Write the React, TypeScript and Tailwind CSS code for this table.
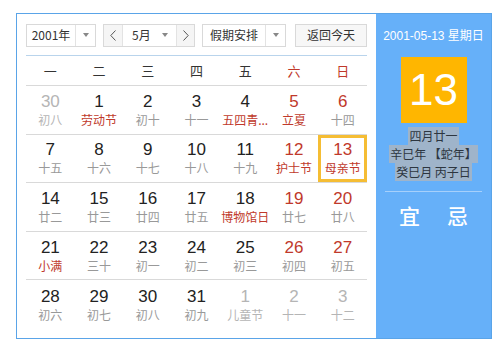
import React from 'react';

type Day = { n: number; lunar: string; dim?: boolean; red?: boolean; fest?: boolean; sel?: boolean };

const weeks: Day[][] = [
  [
    { n: 30, lunar: '初八', dim: true },
    { n: 1, lunar: '劳动节', fest: true },
    { n: 2, lunar: '初十' },
    { n: 3, lunar: '十一' },
    { n: 4, lunar: '五四青...', fest: true },
    { n: 5, lunar: '立夏', red: true, fest: true },
    { n: 6, lunar: '十四', red: true },
  ],
  [
    { n: 7, lunar: '十五' },
    { n: 8, lunar: '十六' },
    { n: 9, lunar: '十七' },
    { n: 10, lunar: '十八' },
    { n: 11, lunar: '十九' },
    { n: 12, lunar: '护士节', red: true, fest: true },
    { n: 13, lunar: '母亲节', red: true, fest: true, sel: true },
  ],
  [
    { n: 14, lunar: '廿二' },
    { n: 15, lunar: '廿三' },
    { n: 16, lunar: '廿四' },
    { n: 17, lunar: '廿五' },
    { n: 18, lunar: '博物馆日', fest: true },
    { n: 19, lunar: '廿七', red: true },
    { n: 20, lunar: '廿八', red: true },
  ],
  [
    { n: 21, lunar: '小满', fest: true },
    { n: 22, lunar: '三十' },
    { n: 23, lunar: '初一' },
    { n: 24, lunar: '初二' },
    { n: 25, lunar: '初三' },
    { n: 26, lunar: '初四', red: true },
    { n: 27, lunar: '初五', red: true },
  ],
  [
    { n: 28, lunar: '初六' },
    { n: 29, lunar: '初七' },
    { n: 30, lunar: '初八' },
    { n: 31, lunar: '初九' },
    { n: 1, lunar: '儿童节', dim: true },
    { n: 2, lunar: '十一', dim: true },
    { n: 3, lunar: '十二', dim: true },
  ],
];

const heads = ['一', '二', '三', '四', '五', '六', '日'];

function Caret() {
  return <span className="h-0 w-0 border-x-[3px] border-t-[4px] border-x-transparent border-t-[#888]" />;
}

function Chevron({ dir }: { dir: 'l' | 'r' }) {
  return (
    <svg width="6" height="11" viewBox="0 0 6 11" fill="none" stroke="#555" strokeWidth="1">
      <path d={dir === 'l' ? 'M5.5 0.5 L0.8 5.5 L5.5 10.5' : 'M0.5 0.5 L5.2 5.5 L0.5 10.5'} />
    </svg>
  );
}

function DayCell({ d }: { d: Day }) {
  const numColor = d.dim ? 'text-[#b5b5b5]' : d.red ? 'text-[#c0392b]' : 'text-[#222]';
  const lunColor = d.dim ? 'text-[#b5b5b5]' : d.fest ? 'text-[#c0392b]' : 'text-[#999]';
  return (
    <div
      className={`flex h-full flex-col items-center justify-center ${
        d.sel ? 'border-[3px] border-[#f5bd34]' : ''
      }`}
    >
      <div className={`font-['Liberation_Sans',sans-serif] text-[17px] leading-[20px] ${numColor}`}>{d.n}</div>
      <div className={`whitespace-nowrap text-[12px] leading-[16px] ${lunColor}`}>{d.lunar}</div>
    </div>
  );
}

export default function App() {
  return (
    <div className="h-[342px] w-[499px] bg-white pl-4 pt-[13px] font-['Noto_Sans_CJK_SC',sans-serif]">
      <div className="flex h-[326px] w-[476px] border border-[#5aa4e8]">
        <div className="flex w-[359px] flex-col bg-white px-[9px]">
          <div className="flex h-[42px] items-center gap-[7px] border-b border-[#b9d4ec] pt-[1px]">
            <div className="flex h-[23px] w-[70px] items-center border border-[#d9d9d9] text-[12px] text-[#333]">
              <span className="w-[48px] text-center">2001年</span>
              <span className="flex h-full flex-1 items-center justify-center border-l border-[#e3e3e3]"><Caret /></span>
            </div>
            <div className="flex h-[23px] w-[92px] items-center border border-[#d9d9d9] text-[12px] text-[#333]">
              <span className="flex h-full w-[19px] items-center justify-center border-r border-[#e3e3e3] bg-[#f5f5f5]">
                <Chevron dir="l" />
              </span>
              <span className="flex h-full w-[53px] items-center justify-between pl-[9px] pr-[8px]">
                5月
                <Caret />
              </span>
              <span className="flex h-full flex-1 items-center justify-center border-l border-[#e3e3e3] bg-[#f5f5f5]">
                <Chevron dir="r" />
              </span>
            </div>
            <div className="flex h-[23px] w-[84px] items-center border border-[#d9d9d9] text-[12px] text-[#333]">
              <span className="w-[62px] text-center">假期安排</span>
              <span className="flex h-full flex-1 items-center justify-center border-l border-[#e3e3e3]"><Caret /></span>
            </div>
            <div className="ml-auto flex h-[23px] w-[72px] items-center justify-center border border-[#d9d9d9] bg-[#f7f7f7] text-[12px] text-[#333]">
              返回今天
            </div>
          </div>
          <div className="grid h-[30px] grid-cols-7 items-center border-b border-[#d9d9d9] text-[13px]">
            {heads.map((h, i) => (
              <div key={h} className={`text-center ${i >= 5 ? 'text-[#c0392b]' : 'text-[#333]'}`}>
                {h}
              </div>
            ))}
          </div>
          {weeks.map((w, wi) => (
            <div
              key={wi}
              className={`grid h-[48.6px] grid-cols-7 ${wi < weeks.length - 1 ? 'border-b border-[#d9d9d9]' : ''}`}
            >
              {w.map((d, di) => (
                <DayCell key={di} d={d} />
              ))}
            </div>
          ))}
        </div>
        <div className="flex flex-1 flex-col items-center bg-[#66b0f9] pt-[13px] text-white">
          <div className="font-['Liberation_Sans','Noto_Sans_CJK_SC',sans-serif] text-[12px] leading-[18px]">2001-05-13 星期日</div>
          <div className="mt-[12px] flex h-[66px] w-[66px] items-center justify-center bg-[#ffb600] font-['Liberation_Sans',sans-serif] text-[44px] leading-none">
            13
          </div>
          <div className="mt-[4px] flex flex-col items-center text-[12px] leading-[18px] text-[#2d3640]">
            <span className="bg-[#9fb4ca] px-[1px]">四月廿一</span>
            <span className="bg-[#9fb4ca] px-[1px]">辛巳年 【蛇年】</span>
            <span className="bg-[#9fb4ca] px-[1px]">癸巳月 丙子日</span>
          </div>
          <div className="mt-[10px] h-px w-[97px] bg-[#a6d0fb]" />
          <div className="mt-[8px] flex gap-[27px] text-[21px] font-medium leading-[30px]">
            <span>宜</span>
            <span>忌</span>
          </div>
        </div>
      </div>
    </div>
  );
}
